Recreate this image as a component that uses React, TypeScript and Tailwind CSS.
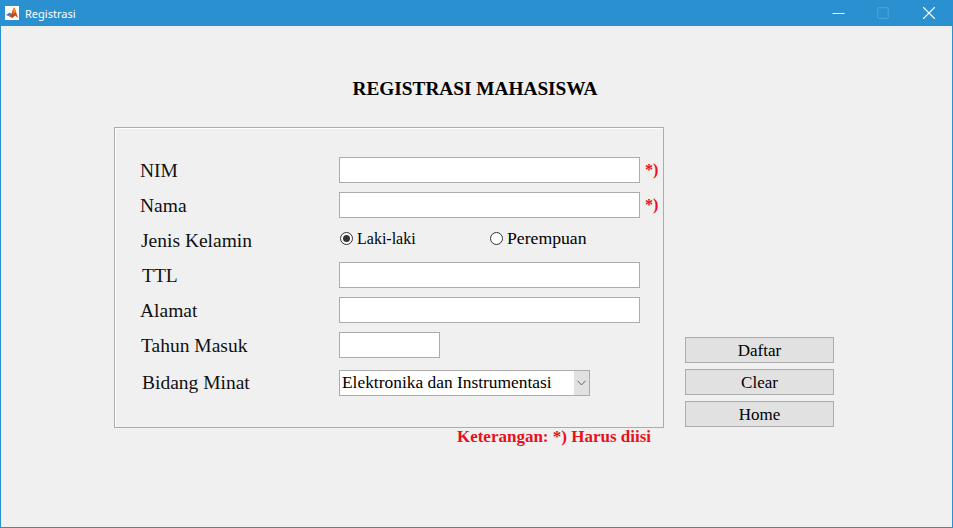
import { Minus, Square, X, ChevronDown } from "lucide-react";

const serif = "font-['Liberation_Serif',serif]";

function MatlabIcon() {
  return (
    <div className="flex h-[14px] w-[14px] items-center justify-center bg-white">
      <svg width="14" height="14" viewBox="0 0 14 14">
        <path d="M1 9 L5 6.5 L6.5 8 L3.5 10 Z" fill="#3f6fa8" />
        <path d="M3.5 10 L6.5 8 L8 3 L9.5 1.5 L13 12 L10 9.5 L7.5 12 Z" fill="#c8431c" />
        <path d="M8 3 L9.5 1.5 L11 6 L8.5 8 Z" fill="#f08a24" />
      </svg>
    </div>
  );
}

function TextBox({ width }: { width: string }) {
  return <div className={`h-[26px] shrink-0 border border-[#acacac] bg-white ${width}`}></div>;
}

function Radio({ label, checked, width, textClass }: { label: string; checked?: boolean; width: string; textClass: string }) {
  return (
    <div className={`flex items-center gap-[4px] ${width}`}>
      <span className="flex h-[13px] w-[13px] items-center justify-center rounded-full border border-[#333] bg-white">
        {checked && <span className="h-[7px] w-[7px] rounded-full bg-[#333]"></span>}
      </span>
      <span className={`leading-none text-black ${textClass}`}>{label}</span>
    </div>
  );
}

function Required() {
  return <span className="ml-[5px] text-[16px] font-bold leading-none text-[#e8101c]">*)</span>;
}

function FormRow({ label, labelClass, children, rowClass = "" }: { label: string; labelClass: string; children: React.ReactNode; rowClass?: string }) {
  return (
    <div className={`flex h-[26px] items-center ${rowClass}`}>
      <div className={`w-[199px] shrink-0 text-[19.5px] leading-none text-[#111] ${labelClass}`}>{label}</div>
      {children}
    </div>
  );
}

function ActionButton({ label }: { label: string }) {
  return (
    <button className="h-[26px] w-[149px] border border-[#acacac] bg-[#e1e1e1] pt-[1px] text-[17px] leading-none text-black">
      {label}
    </button>
  );
}

export default function App() {
  return (
    <div className={`flex h-[528px] w-[953px] flex-col overflow-hidden border border-t-0 border-[#2b90d0] bg-[#f0f0f0] ${serif}`}>
      <div className="flex h-[26px] shrink-0 items-center bg-[#2b90d0] pl-[4px] text-white">
        <MatlabIcon />
        <span className="ml-[6px] font-['Noto_Sans',sans-serif] text-[11px] leading-none">Registrasi</span>
        <div className="ml-auto flex items-center">
          <Minus size={19} strokeWidth={1.3} className="mr-[28px]" />
          <Square size={14} strokeWidth={1.7} className="mr-[28px] text-[#4fa6dc]" />
          <X size={22} strokeWidth={1.2} className="mr-[12px]" />
        </div>
      </div>

      <div className="pt-[50px] pr-[3px] text-center text-[19.3px] font-bold leading-[26px] text-black">REGISTRASI MAHASISWA</div>

      <div className="mt-[25px] flex pl-[113px]">
        <div className="w-[550px] shrink-0">
          <div className="h-[301px] w-[550px] border border-[#acacac] pt-[29px] shadow-[inset_1px_1px_0_#fff]">
            <div className="flex flex-col gap-[9px] pl-[25px]">
              <FormRow label="NIM" labelClass="pt-[2px]">
                <TextBox width="w-[301px]" />
                <Required />
              </FormRow>
              <FormRow label="Nama" labelClass="pt-[2px]">
                <TextBox width="w-[301px]" />
                <Required />
              </FormRow>
              <FormRow label="Jenis Kelamin" labelClass="pl-[1px] pt-[2px]">
                <div className="flex -translate-y-[1px] pl-[1px]">
                  <Radio label="Laki-laki" checked width="w-[150px]" textClass="text-[16px]" />
                  <Radio label="Perempuan" width="w-[110px]" textClass="text-[17.7px]" />
                </div>
              </FormRow>
              <FormRow label="TTL" labelClass="pl-[2px] pt-[2px]">
                <TextBox width="w-[301px]" />
              </FormRow>
              <FormRow label="Alamat" labelClass="pt-[2px]">
                <TextBox width="w-[301px]" />
              </FormRow>
              <FormRow label="Tahun Masuk" labelClass="pl-[1px] pt-[2px]">
                <TextBox width="w-[101px]" />
              </FormRow>
              <FormRow label="Bidang Minat" labelClass="pl-[2px]" rowClass="mt-[3px]">
                <div className="flex h-[26px] w-[251px] shrink-0 items-center border border-[#acacac] bg-white pl-[2px]">
                  <span className="flex-1 text-[17.4px] leading-none text-black">Elektronika dan Instrumentasi</span>
                  <span className="flex h-full w-[15px] items-center justify-center bg-[#e1e1e1]">
                    <ChevronDown size={16} strokeWidth={1.3} className="text-[#444]" />
                  </span>
                </div>
              </FormRow>
            </div>
          </div>
          <div className="mt-[1px] pr-[13px] text-right text-[17px] font-bold leading-[16px] text-[#e8101c]">Keterangan: *) Harus diisi</div>
        </div>

        <div className="ml-[21px] flex flex-col gap-[6px] pt-[210px]">
          <ActionButton label="Daftar" />
          <ActionButton label="Clear" />
          <ActionButton label="Home" />
        </div>
      </div>
    </div>
  );
}
